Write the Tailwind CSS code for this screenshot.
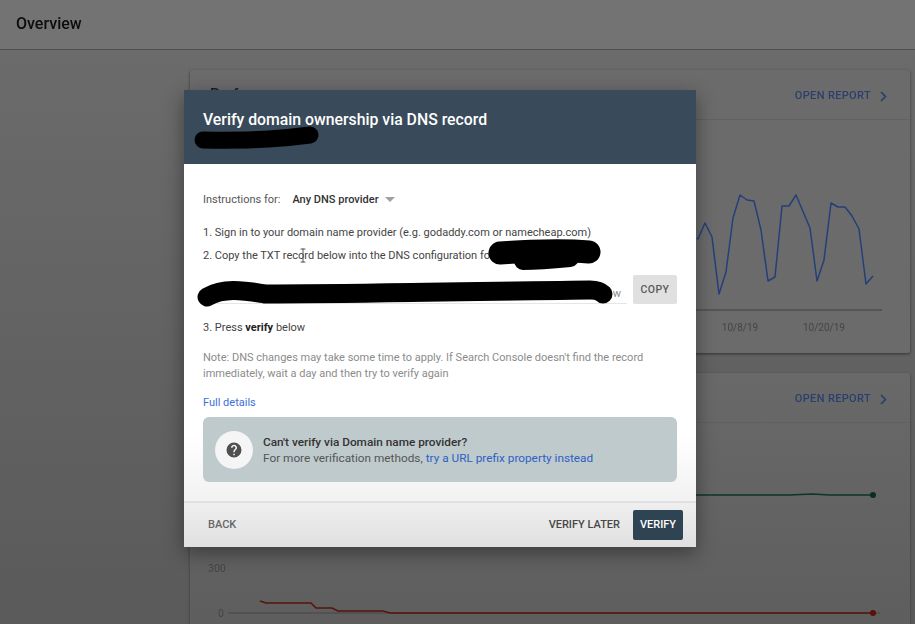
<!DOCTYPE html>
<html lang="en">
  <head>
    <meta charset="UTF-8" />
    <meta name="viewport" content="width=device-width, initial-scale=1.0" />
    <title>Overview - Search Console</title>
    <script src="https://cdn.jsdelivr.net/npm/@tailwindcss/browser@4"></script>
  </head>
  <body class="bg-[#6c6c6c] font-['Roboto',sans-serif]">
    <div class="relative w-[915px] h-[624px] overflow-hidden blur-[0.4px]">
      <!-- Page behind the dialog -->
      <header class="h-[50px] bg-[#737373] flex items-center pl-4 pb-[2px] shadow-[0_2px_3px_rgba(0,0,0,0.35)] border-b border-[#4f4f4f]">
        <h1 class="text-[16px] leading-none font-medium text-[#0d0d0d]">Overview</h1>
      </header>

      <main class="pl-[190px] pr-[5px] pt-5 bg-gradient-to-b from-[#6b6b6b] to-[#5a5a5a] h-[574px]">
        <!-- Performance card -->
        <section class="h-[283px] bg-[#6b6b6b] rounded-[2px] shadow-[0_1px_3px_rgba(0,0,0,0.5)]">
          <div class="h-[50px] flex items-center justify-between pl-5 pr-[22px] pt-1 border-b border-[#626262]">
            <span class="mb-[4px] text-[15px] font-medium text-[#1c1c1c]">Performance</span>
            <a class="flex items-center gap-[8px] text-[11px] font-medium tracking-[0.35px] text-[#2a3f6e]">
              OPEN REPORT
              <svg class="w-[9px] h-[11px]" viewBox="0 0 9 11" fill="none" stroke="#2a3f6e" stroke-width="1.7"><path d="M2 1l4.5 4.5L2 10" /></svg>
            </a>
          </div>
          <svg class="block" width="720" height="233" viewBox="190 120 720 233" fill="none">
            <path d="M696 310H882" stroke="#404040" stroke-width="1" />
            <polyline stroke="#24407a" stroke-width="1.5" stroke-linejoin="round" points="697,238 698,239 705,223 712,237 719,294 726,272 733,218 740,195 747,200 754,201 761,230 768,281 775,277 782,206 789,206 796,195 810,228 817,281 824,260 831,203 838,207 845,207 852,216 859,229 866,284 873,276" />
            <text x="740" y="331" text-anchor="middle" font-size="10" fill="#454545">10/8/19</text>
            <text x="824" y="331" text-anchor="middle" font-size="10" fill="#454545">10/20/19</text>
          </svg>
        </section>

        <!-- Coverage card -->
        <section class="mt-5 h-[300px] bg-gradient-to-b from-[#696969] to-[#5c5c5c] rounded-[2px] shadow-[0_1px_3px_rgba(0,0,0,0.4)]">
          <div class="h-[50px] flex items-center justify-end pr-[22px] pt-1 border-b border-[#606060]">
            <a class="flex items-center gap-[8px] text-[11px] font-medium tracking-[0.35px] text-[#2a3f6e]">
              OPEN REPORT
              <svg class="w-[9px] h-[11px]" viewBox="0 0 9 11" fill="none" stroke="#2a3f6e" stroke-width="1.7"><path d="M2 1l4.5 4.5L2 10" /></svg>
            </a>
          </div>
          <svg class="block" width="720" height="201" viewBox="190 423 720 201" fill="none">
            <path d="M696 495H760L790 495L812 494L830 495H873" stroke="#0f3524" stroke-width="1.5" />
            <circle cx="873" cy="495" r="3" fill="#0b2c1e" />
            <path d="M228 613H880" stroke="#474747" stroke-width="1" />
            <path d="M260 601L266 603H311L316 608H332L338 611H383L390 613H873" stroke="#57140c" stroke-width="1.5" />
            <circle cx="873" cy="613" r="3" fill="#5c0f08" />
            <text x="208" y="572" font-size="10.5" fill="#454545">300</text>
            <text x="218" y="617" font-size="10.5" fill="#454545">0</text>
          </svg>
        </section>
      </main>

      <!-- Verify dialog -->
      <div class="absolute left-[184px] top-[90px] w-[512px] h-[457px] flex flex-col bg-white shadow-[0_6px_18px_rgba(0,0,0,0.4)]">
        <div class="h-[74px] bg-[#394b5a] pl-[19px] pt-[20px]">
          <h2 class="text-[15.8px] leading-5 font-medium text-white">Verify domain ownership via DNS record</h2>
        </div>

        <div class="flex-1 pl-[19px] pr-[19px] text-[11px] text-[#444444] bg-gradient-to-b from-white from-80% to-[#f2f2f2]">
          <div class="mt-[28px] flex items-center h-4">
            <span class="text-[#555555]">Instructions for:</span>
            <span class="ml-[12px] font-medium text-[#333333]">Any DNS provider</span>
            <svg class="ml-[6px]" width="10" height="6" viewBox="0 0 10 6"><path d="M0 0h10L5 5z" fill="#a0a0a0" /></svg>
          </div>
          <p class="mt-[17px] leading-4">1. Sign in to your domain name provider (e.g. godaddy.com or namecheap.com)</p>
          <p class="mt-[7px] leading-4">2. Copy the TXT record below into the DNS configuration for</p>
          <div class="mt-[11px] flex items-end justify-between h-[29px]">
            <div class="w-[424px] h-5 border-b border-[#e6e6e6] text-right text-[#8a8a8a] pr-[6px] leading-5">w</div>
            <button class="w-11 h-[29px] bg-[#e0e0e0] rounded-[2px] text-[10.5px] font-medium tracking-[0.4px] text-[#5a5a5a]">COPY</button>
          </div>
          <p class="mt-[16px] leading-4">3. Press <b class="font-bold text-[#222222]">verify</b> below</p>
          <p class="mt-[14px] text-[#8b8b8b] leading-4">Note: DNS changes may take some time to apply. If Search Console doesn't find the record<br />immediately, wait a day and then try to verify again</p>
          <a class="block mt-[13px] leading-4 text-[#3d6ed8]">Full details</a>
          <div class="mt-[6px] h-[65px] rounded-md bg-[#bfcacc] flex items-center pl-3 gap-[10px]">
            <div class="w-[38px] h-[38px] rounded-full bg-[#f5f5f5] flex items-center justify-center">
              <svg width="18" height="18" viewBox="0 0 24 24"><path fill="#4f4f4f" d="M12 2a10 10 0 1 0 0 20 10 10 0 0 0 0-20zm1 17h-2v-2h2v2zm2.07-7.75l-.9.92C13.45 12.9 13 13.5 13 15h-2v-.5c0-1.1.45-2.1 1.17-2.83l1.24-1.26c.37-.36.59-.86.59-1.41 0-1.1-.9-2-2-2s-2 .9-2 2H8c0-2.21 1.79-4 4-4s4 1.79 4 4c0 .88-.36 1.68-.93 2.25z" /></svg>
            </div>
            <div class="text-[11.8px] leading-4">
              <p class="font-medium text-[#333333]">Can't verify via Domain name provider?</p>
              <p class="text-[#555555]">For more verification methods, <a class="text-[#2f5fc4]">try a URL prefix property instead</a></p>
            </div>
          </div>
        </div>

        <div class="h-[46px] border-t-2 border-[#e0e0e0] bg-gradient-to-b from-[#efefef] to-[#e0e0e0] flex items-center justify-between pl-6 pr-[13px] text-[11px] font-medium">
          <button class="text-[#666666]">BACK</button>
          <div class="flex items-center gap-[13px]">
            <button class="text-[#484848]">VERIFY LATER</button>
            <button class="w-[50px] h-[30px] bg-[#2f4453] rounded-[2px] text-white">VERIFY</button>
          </div>
        </div>

        <!-- Redaction marks and the text cursor -->
        <svg class="absolute left-0 top-0 pointer-events-none" width="512" height="457" viewBox="184 90 512 457" fill="none" stroke="#000000" stroke-linecap="round">
          <path d="M203 140C240 141 280 139 310 135" stroke-width="17" />
          <path d="M500 253C530 251 565 250 589 252" stroke-width="23" />
          <path d="M523 261C540 261 550 260 570 258" stroke-width="18" />
          <path d="M207 297C225 287 245 291 265 294C350 294 500 291 590 290C597 290 601 292 603 294" stroke-width="19" />
          <path d="M301 249h4M303 249v13M301 262h4" stroke="#555555" stroke-width="1" />
        </svg>
      </div>
    </div>
  </body>
</html>
